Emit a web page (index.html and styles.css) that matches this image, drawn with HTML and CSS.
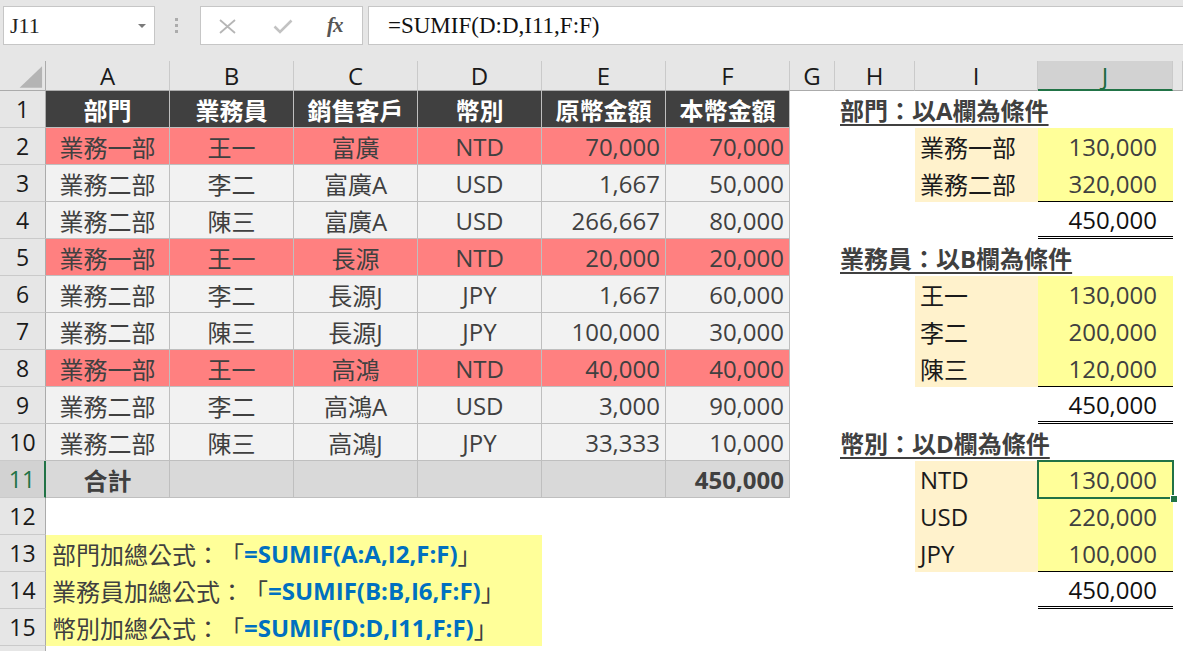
FILE: index.html
```html
<!DOCTYPE html>
<html lang="zh-Hant">
<head>
<meta charset="utf-8">
<title>SUMIF</title>
<link rel="stylesheet" href="styles.css">
</head>
<body>
<div class="app">
  <div class="bar">
    <div class="namebox"><span class="ref">J11</span><span class="caret"></span></div>
    <div class="grip"><i></i><i></i><i></i></div>
    <div class="btns">
      <svg class="ic-x" width="19" height="15" viewBox="0 0 19 15"><path d="M2 1 L17 14 M17 1 L2 14" stroke="#b6b6b6" stroke-width="1.8" fill="none"/></svg>
      <svg class="ic-ok" width="20" height="15" viewBox="0 0 20 15"><path d="M1.5 7.5 L7 13 L18.5 1.5" stroke="#c2c2c2" stroke-width="2.6" fill="none"/></svg>
      <span class="fx">fx</span>
    </div>
    <div class="formula">=SUMIF(D:D,I11,F:F)</div>
  </div>

  <div class="sheet">
    <!-- column headers -->
    <div class="ch corner"><svg width="46" height="30" viewBox="0 0 46 30"><polygon points="43,5 43,27 20,27" fill="#b4b4b4"/></svg></div>
    <div class="ch">A</div><div class="ch">B</div><div class="ch">C</div><div class="ch">D</div><div class="ch">E</div><div class="ch">F</div>
    <div class="ch">G</div><div class="ch">H</div><div class="ch">I</div><div class="ch chsel">J</div><div class="ch"></div>

    <!-- row 1 -->
    <div class="rh">1</div>
    <div class="t th">部門</div><div class="t th">業務員</div><div class="t th">銷售客戶</div><div class="t th">幣別</div><div class="t th">原幣金額</div><div class="t th">本幣金額</div>
    <div class="c"></div><div class="hd"><span>部門：以A欄為條件</span></div><div class="c"></div>

    <!-- row 2 -->
    <div class="rh">2</div>
    <div class="t pk ctr">業務一部</div><div class="t pk ctr">王一</div><div class="t pk ctr">富廣</div><div class="t pk ctr">NTD</div><div class="t pk num">70,000</div><div class="t pk num">70,000</div>
    <div class="c"></div><div class="c"></div><div class="in">業務一部</div><div class="jv">130,000</div><div class="c"></div>

    <!-- row 3 -->
    <div class="rh">3</div>
    <div class="t gy ctr">業務二部</div><div class="t gy ctr">李二</div><div class="t gy ctr">富廣A</div><div class="t gy ctr">USD</div><div class="t gy num">1,667</div><div class="t gy num">50,000</div>
    <div class="c"></div><div class="c"></div><div class="in">業務二部</div><div class="jv sb">320,000</div><div class="c"></div>

    <!-- row 4 -->
    <div class="rh">4</div>
    <div class="t gy ctr">業務二部</div><div class="t gy ctr">陳三</div><div class="t gy ctr">富廣A</div><div class="t gy ctr">USD</div><div class="t gy num">266,667</div><div class="t gy num">80,000</div>
    <div class="c"></div><div class="c"></div><div class="c"></div><div class="jt db">450,000</div><div class="c"></div>

    <!-- row 5 -->
    <div class="rh">5</div>
    <div class="t pk ctr">業務一部</div><div class="t pk ctr">王一</div><div class="t pk ctr">長源</div><div class="t pk ctr">NTD</div><div class="t pk num">20,000</div><div class="t pk num">20,000</div>
    <div class="c"></div><div class="hd"><span>業務員：以B欄為條件</span></div><div class="c"></div>

    <!-- row 6 -->
    <div class="rh">6</div>
    <div class="t gy ctr">業務二部</div><div class="t gy ctr">李二</div><div class="t gy ctr">長源J</div><div class="t gy ctr">JPY</div><div class="t gy num">1,667</div><div class="t gy num">60,000</div>
    <div class="c"></div><div class="c"></div><div class="in">王一</div><div class="jv">130,000</div><div class="c"></div>

    <!-- row 7 -->
    <div class="rh">7</div>
    <div class="t gy ctr">業務二部</div><div class="t gy ctr">陳三</div><div class="t gy ctr">長源J</div><div class="t gy ctr">JPY</div><div class="t gy num">100,000</div><div class="t gy num">30,000</div>
    <div class="c"></div><div class="c"></div><div class="in">李二</div><div class="jv">200,000</div><div class="c"></div>

    <!-- row 8 -->
    <div class="rh">8</div>
    <div class="t pk ctr">業務一部</div><div class="t pk ctr">王一</div><div class="t pk ctr">高鴻</div><div class="t pk ctr">NTD</div><div class="t pk num">40,000</div><div class="t pk num">40,000</div>
    <div class="c"></div><div class="c"></div><div class="in">陳三</div><div class="jv sb">120,000</div><div class="c"></div>

    <!-- row 9 -->
    <div class="rh">9</div>
    <div class="t gy ctr">業務二部</div><div class="t gy ctr">李二</div><div class="t gy ctr">高鴻A</div><div class="t gy ctr">USD</div><div class="t gy num">3,000</div><div class="t gy num">90,000</div>
    <div class="c"></div><div class="c"></div><div class="c"></div><div class="jt db">450,000</div><div class="c"></div>

    <!-- row 10 -->
    <div class="rh">10</div>
    <div class="t gy ctr">業務二部</div><div class="t gy ctr">陳三</div><div class="t gy ctr">高鴻J</div><div class="t gy ctr">JPY</div><div class="t gy num">33,333</div><div class="t gy num">10,000</div>
    <div class="c"></div><div class="hd"><span>幣別：以D欄為條件</span></div><div class="c"></div>

    <!-- row 11 -->
    <div class="rh rhsel">11</div>
    <div class="t tot ctr bold">合計</div><div class="t tot"></div><div class="t tot"></div><div class="t tot"></div><div class="t tot"></div><div class="t tot num bold">450,000</div>
    <div class="c"></div><div class="c"></div><div class="in">NTD</div><div class="jv sel">130,000</div><div class="c"></div>

    <!-- row 12 -->
    <div class="rh">12</div>
    <div class="c"></div><div class="c"></div><div class="c"></div><div class="c"></div><div class="c"></div><div class="c"></div>
    <div class="c"></div><div class="c"></div><div class="in">USD</div><div class="jv">220,000</div><div class="c"></div>

    <!-- row 13 -->
    <div class="rh">13</div>
    <div class="fm"><span class="lbl">部門加總公式：「</span><span class="fn">=SUMIF(A:A,I2,F:F)</span><span class="lbl">」</span></div>
    <div class="c"></div><div class="c"></div>
    <div class="c"></div><div class="c"></div><div class="in">JPY</div><div class="jv sb">100,000</div><div class="c"></div>

    <!-- row 14 -->
    <div class="rh">14</div>
    <div class="fm"><span class="lbl">業務員加總公式：「</span><span class="fn">=SUMIF(B:B,I6,F:F)</span><span class="lbl">」</span></div>
    <div class="c"></div><div class="c"></div>
    <div class="c"></div><div class="c"></div><div class="c"></div><div class="jt db">450,000</div><div class="c"></div>

    <!-- row 15 -->
    <div class="rh">15</div>
    <div class="fm"><span class="lbl">幣別加總公式：「</span><span class="fn">=SUMIF(D:D,I11,F:F)</span><span class="lbl">」</span></div>
    <div class="c"></div><div class="c"></div>
    <div class="c"></div><div class="c"></div><div class="c"></div><div class="c"></div><div class="c"></div>

    <!-- row 16 (partial) -->
    <div class="rh"></div>
  </div>
</div>
</body>
</html>
```

FILE: styles.css
```css
html, body {
  margin: 0;
  padding: 0;
  background: #ffffff;
  overflow: hidden;
}
.app {
  width: 1183px;
  height: 651px;
  overflow: hidden;
  font-family: "Open Sans", "Noto Sans CJK TC", sans-serif;
  text-spacing-trim: space-all;
}

/* ---------- formula bar ---------- */
.bar {
  height: 61px;
  box-sizing: border-box;
  padding-top: 6px;
  background: #e6e6e6;
  display: flex;
  align-items: flex-start;
}
.namebox {
  margin-left: 3px;
  width: 152px;
  height: 39px;
  box-sizing: border-box;
  background: #fff;
  border: 1px solid #c6c6c6;
  display: flex;
  align-items: center;
  justify-content: space-between;
  padding: 0 8px 0 6px;
}
.ref {
  font-family: "Liberation Serif", serif;
  font-size: 22px;
  color: #222;
}
.caret {
  width: 0;
  height: 0;
  border-left: 4px solid transparent;
  border-right: 4px solid transparent;
  border-top: 4px solid #7a7a7a;
  margin-top: 1px;
}
.grip {
  margin-left: 20px;
  margin-top: 12px;
  display: flex;
  flex-direction: column;
  gap: 3px;
}
.grip i {
  display: block;
  width: 3px;
  height: 3px;
  background: #acacac;
}
.btns {
  margin-left: 22px;
  width: 163px;
  height: 39px;
  box-sizing: border-box;
  background: #fff;
  border: 1px solid #c6c6c6;
  display: flex;
  align-items: center;
  padding-left: 17px;
}
.ic-x { margin-top: 1px; }
.ic-ok { margin-left: 36px; margin-top: 2px; }
.fx {
  margin-left: 34px;
  font-family: "Liberation Serif", serif;
  font-style: italic;
  font-weight: 700;
  font-size: 21px;
  color: #555;
  letter-spacing: -1px;
}
.formula {
  margin-left: 5px;
  margin-right: -2px;
  flex: 1;
  height: 39px;
  box-sizing: border-box;
  background: #fff;
  border: 1px solid #c6c6c6;
  display: flex;
  align-items: center;
  padding-left: 19px;
  font-family: "Liberation Serif", serif;
  font-size: 23px;
  color: #111;
}

/* ---------- sheet grid ---------- */
.sheet {
  display: grid;
  grid-template-columns: 46px repeat(6, 124px) 45px 80px 123px 135px 10px;
  grid-template-rows: 30px repeat(15, 37px) 10px;
  background: #fff;
  font-size: 24px;
  color: #404040;
}
.sheet > div {
  box-sizing: border-box;
  display: flex;
  align-items: center;
  white-space: nowrap;
  min-width: 0;
}
.ch {
  background: #e6e6e6;
  border-right: 1px solid #cacaca;
  border-bottom: 1px solid #ababab;
  justify-content: center;
  font-size: 24px;
  color: #1a1a1a;
}
.corner {
  padding: 0;
  border-right: 1px solid #ababab;
}
.corner svg { display: block; }
.chsel {
  background: #d2d2d2;
  color: #1d6b40;
  border-bottom: 2px solid #217346;
}
.rh {
  background: #e6e6e6;
  border-right: 1px solid #ababab;
  border-bottom: 1px solid #cacaca;
  justify-content: center;
  font-size: 23px;
  color: #1a1a1a;
}
.rhsel {
  background: #d2d2d2;
  color: #217346;
  border-right: 2px solid #217346;
}

/* table cells */
.t {
  border-right: 1px solid #bfbfbf;
  border-bottom: 1px solid #bfbfbf;
  padding: 0 5px;
}
.th {
  background: #404040;
  color: #ffffff;
  font-weight: 700;
  justify-content: center;
}
.pk { background: #ff8080; }
.gy { background: #f2f2f2; }
.tot { background: #d9d9d9; }
.ctr { justify-content: center; }
.num { justify-content: flex-end; }
.bold { font-weight: 700; }

/* right summary */
.hd {
  grid-column: span 3;
  padding-left: 5px;
  font-weight: 700;
  color: #404040;
}
.hd span {
  text-decoration: underline;
  text-decoration-thickness: 2px;
  text-underline-offset: 4px;
}
.in {
  background: #fff2cc;
  color: #1a1a1a;
  padding-left: 5px;
}
.jv {
  background: #ffff99;
  justify-content: flex-end;
  padding-right: 16px;
  color: #404040;
}
.jt {
  justify-content: flex-end;
  padding-right: 16px;
  color: #111;
}
.sb { border-bottom: 1px solid #000; }
.db { border-bottom: 3px double #000; }
.sel {
  position: relative;
  outline: 2px solid #217346;
  outline-offset: -1px;
}
.sel::after {
  content: "";
  position: absolute;
  right: -4px;
  bottom: -4px;
  width: 6px;
  height: 6px;
  background: #217346;
  border-left: 1px solid #fff;
  border-top: 1px solid #fff;
}

/* formulas */
.fm {
  grid-column: span 4;
  background: #ffff99;
  padding-left: 6px;
}
.lbl { color: #404040; }
.fn {
  color: #0070c0;
  font-weight: 700;
}
```
